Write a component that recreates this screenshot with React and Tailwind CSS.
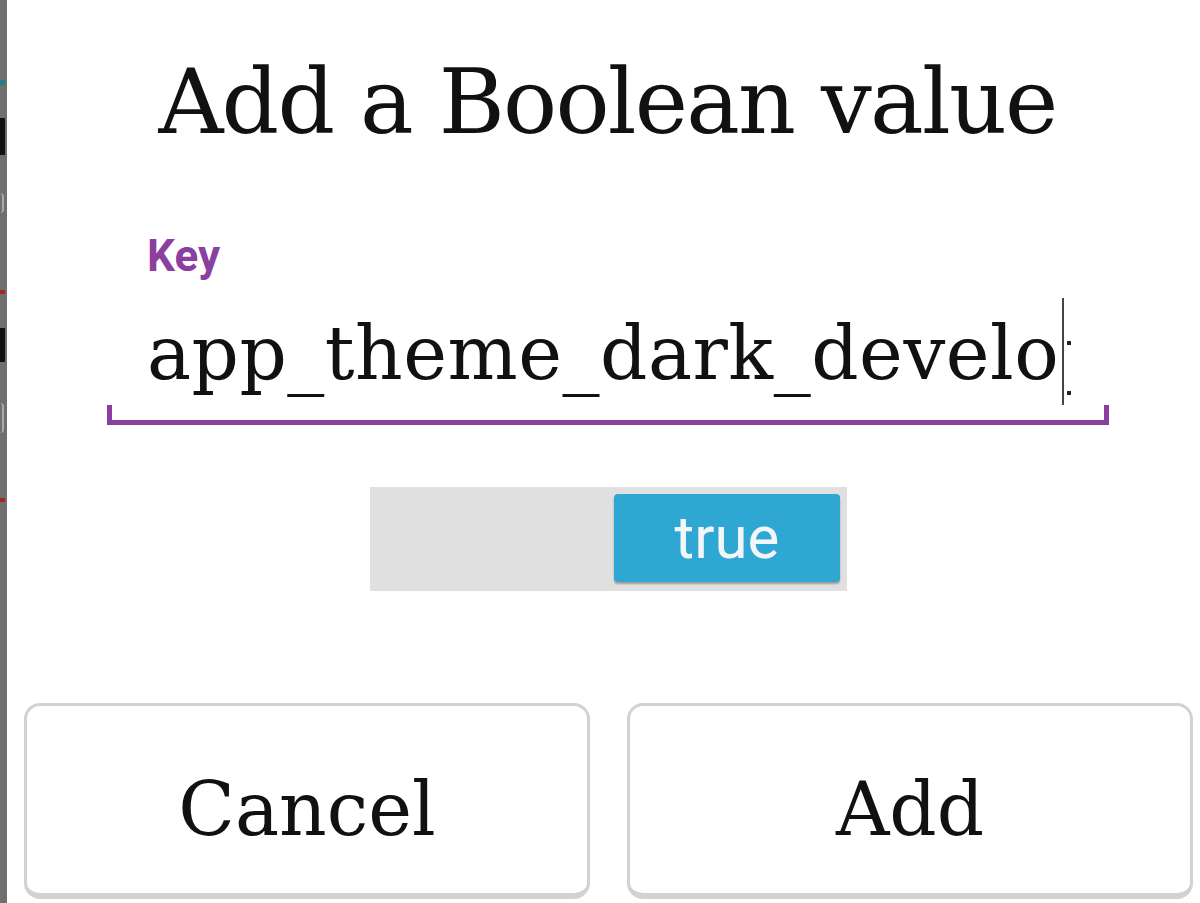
export default function App() {
  const serif = { fontFamily: '"DejaVu Serif", "Liberation Serif", serif' };
  const sans = { fontFamily: 'Roboto, "Liberation Sans", sans-serif' };
  return (
    <div className="w-[1200px] h-[903px] flex overflow-hidden bg-white">
      <div className="relative w-[7px] h-full bg-[#6f6f6f] shrink-0">
        <div className="absolute left-0 top-[80px] w-[5px] h-[5px] bg-[#1f7f8c]" />
        <div className="absolute left-0 top-[118px] w-[5px] h-[37px] bg-[#111]" />
        <div className="absolute left-0 top-[193px] w-[4px] h-[20px] border-r-2 border-[#aaa] rounded-r-full" />
        <div className="absolute left-0 top-[290px] w-[5px] h-[4px] bg-[#a32a1c]" />
        <div className="absolute left-0 top-[328px] w-[5px] h-[34px] bg-[#111]" />
        <div className="absolute left-0 top-[403px] w-[4px] h-[30px] border-r-2 border-[#aaa] rounded-r-full" />
        <div className="absolute left-0 top-[498px] w-[5px] h-[4px] bg-[#a32a1c]" />
      </div>
      <div className="flex-1 flex flex-col">
        <div className="mt-[57px] pl-[8px] text-center text-[90px] leading-none tracking-[-1.8px] text-[#111]" style={serif}>
          Add a Boolean value
        </div>
        <div className="mt-[87px] ml-[100px] w-[1002px] flex flex-col">
          <div className="pl-[40px] text-[44px] leading-none font-bold text-[#8b40a0]" style={sans}>Key</div>
          <div className="mt-[20px] h-[107px] pl-[40px] flex items-start">
            <span className="mt-[18px] text-[74px] leading-none tracking-[0.5px] text-[#111] whitespace-nowrap" style={serif}>
              app_theme_dark_develo
            </span>
            <div className="ml-[3px] w-[2px] h-[107px] bg-[#444]" />
            <div className="ml-[3px] h-[107px] flex flex-col">
              <div className="mt-[43px] w-[4px] h-[4px] bg-[#222]" />
              <div className="mt-[46px] w-[4px] h-[4px] bg-[#222]" />
            </div>
          </div>
          <div className="h-[20px] border-l-[5px] border-r-[5px] border-b-[5px] border-[#8b40a0]" />
        </div>
        <div className="mt-[62px] ml-[10px] self-center w-[477px] h-[104px] bg-[#e0e0e0] flex justify-end items-center pr-[7px]">
          <div className="w-[226px] h-[88px] mb-[2px] rounded-[4px] bg-[#2ea7d3] shadow-[0_2px_2px_rgba(0,0,0,0.3)] flex items-center justify-center text-[60px] leading-none text-[#f2f6f8]" style={sans}>
            true
          </div>
        </div>
        <div className="mt-[112px] pl-[17px] pr-[7px] flex gap-[37px]">
          <div className="flex-1 h-[196px] rounded-[16px] border-[3px] border-b-[6px] border-[#d2d2d2] flex items-center justify-center pt-[18px] text-[74px] leading-none text-[#111]" style={serif}>
            Cancel
          </div>
          <div className="flex-1 h-[196px] rounded-[16px] border-[3px] border-b-[6px] border-[#d2d2d2] flex items-center justify-center pt-[18px] text-[74px] leading-none text-[#111]" style={serif}>
            Add
          </div>
        </div>
      </div>
    </div>
  );
}
